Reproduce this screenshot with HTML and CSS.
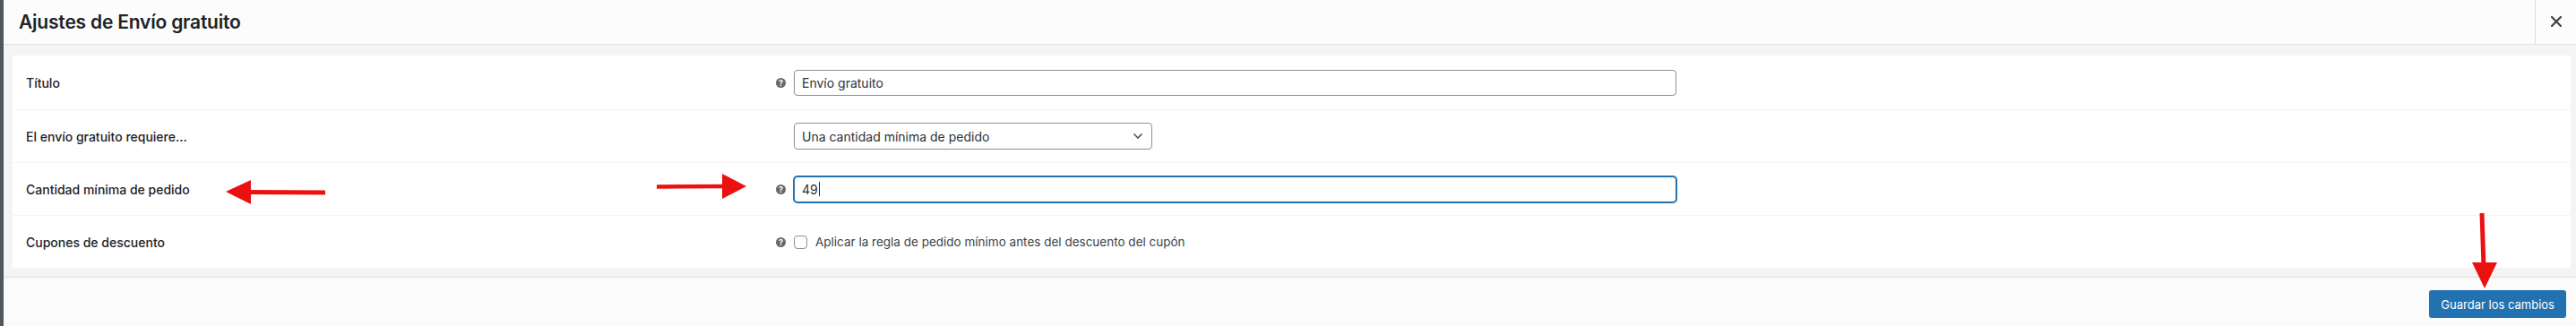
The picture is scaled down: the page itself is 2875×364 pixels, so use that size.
FILE: index.html
```html
<!DOCTYPE html>
<html>
    <head>
        <title>Ajustes de Envío gratuito</title>
        <link rel="stylesheet" href="styles.css">
    </head>
    <body>
        <div class="page">
            <div class="edge"></div>
            <div class="modal">
                <header class="modal-head">
                    <h1>Ajustes de Envío gratuito</h1>
                    <button class="close" aria-label="Cerrar">
                        <svg width="12" height="12" viewBox="0 0 12 12"><path d="M1 1 L11 11 M11 1 L1 11" stroke="#3c434a" stroke-width="2.2" stroke-linecap="square"/></svg>
                    </button>
                </header>

                <div class="modal-body">
                    <div class="card">
                        <div class="row">
                            <label class="label" for="in_title">Título</label>
                            <div class="field">
                                <span class="help">?</span>
                                <input type="text" class="text-input" id="in_title" value="Envío gratuito">
                            </div>
                        </div>
                        <div class="row">
                            <label class="label" for="in_requires">El envío gratuito requiere...</label>
                            <div class="field">
                                <span class="help-spacer"></span>
                                <div class="select" id="in_requires">
                                    <span>Una cantidad mínima de pedido</span>
                                    <svg width="12" height="8" viewBox="0 0 12 8"><path d="M1.5 1.5 L6 6 L10.5 1.5" fill="none" stroke="#50575e" stroke-width="1.6"/></svg>
                                </div>
                            </div>
                        </div>
                        <div class="row">
                            <label class="label" for="in_min">Cantidad mínima de pedido</label>
                            <div class="field">
                                <span class="help">?</span>
                                <div class="text-input focused" id="in_min">49<span class="caret"></span></div>
                            </div>
                        </div>
                        <div class="row">
                            <span class="label">Cupones de descuento</span>
                            <div class="field">
                                <span class="help">?</span>
                                <label class="check"><span class="box"></span>Aplicar la regla de pedido mínimo antes del descuento del cupón</label>
                            </div>
                        </div>
                    </div>
                </div>

                <footer class="modal-foot">
                    <button class="save">Guardar los cambios</button>
                </footer>
            </div>
        </div>

        <!-- red annotation arrows drawn over the screenshot -->
        <svg class="arrows" width="2875" height="364" viewBox="0 0 2875 364">
            <line x1="363" y1="215" x2="274" y2="214.5" stroke="#ec1111" stroke-width="5"/>
            <polygon points="252,214 280,201 280,228" fill="#ec1111"/>
            <line x1="733" y1="208.5" x2="810" y2="208" stroke="#ec1111" stroke-width="4.5"/>
            <polygon points="806,194 806,222 833,208" fill="#ec1111"/>
            <line x1="2770" y1="238" x2="2772" y2="298" stroke="#ec1111" stroke-width="5"/>
            <polygon points="2759,293 2787,293 2773,322" fill="#ec1111"/>
        </svg>
    </body>
</html>
```

FILE: styles.css
```css
body {
    margin: 0;
    background-color: #f6f7f7;
    font-family: Inter, "Noto Sans", sans-serif;
    color: #1d2327;
    overflow: hidden;
}
.page {
    display: flex;
    height: 364px;
}
.edge {
    width: 4px;
    background-color: #50575e;
}
.modal {
    flex: 1;
    display: flex;
    flex-direction: column;
}
.modal-head {
    display: flex;
    align-items: center;
    height: 49px;
    background-color: #fcfcfc;
    border-bottom: 1px solid #e2e4e7;
}
.modal-head h1 {
    flex: 1;
    margin: 0;
    padding-left: 17px;
    font-size: 21px;
    font-weight: 600;
    letter-spacing: -0.2px;
}
.close {
    width: 46px;
    height: 49px;
    border: 0;
    border-left: 1px solid #dcdcde;
    background: none;
    display: flex;
    align-items: center;
    justify-content: center;
    padding: 0 0 2px 0;
}
.modal-body {
    padding: 12px 6px 10px 10px;
    background-color: #f4f4f4;
}
.card {
    background-color: #fff;
}
.row {
    box-sizing: border-box;
    display: grid;
    grid-template-columns: 852px 1fr;
    align-items: center;
    height: 59px;
    border-top: 1px solid #f4f4f4;
}
.row:first-child {
    border-top: 0;
    height: 60px;
}
.label {
    padding-left: 15px;
    font-size: 14px;
    font-weight: 500;
}
.field {
    display: flex;
    align-items: center;
    gap: 9px;
}
.help, .help-spacer {
    width: 11px;
    height: 11px;
    flex: none;
}
.help {
    border-radius: 50%;
    background-color: #646970;
    color: #fff;
    font-size: 9px;
    font-weight: 700;
    line-height: 11px;
    text-align: center;
}
.text-input {
    box-sizing: border-box;
    width: 985px;
    height: 29px;
    padding: 0 8px;
    border: 1px solid #8c8f94;
    border-radius: 4px;
    font-family: Inter, "Noto Sans", sans-serif;
    font-size: 14px;
    color: #2c3338;
    background-color: #fff;
}
.text-input.focused {
    display: flex;
    align-items: center;
    border-color: #2271b1;
    box-shadow: 0 0 0 1px #2271b1;
}
.caret {
    width: 1px;
    height: 16px;
    margin-left: 1px;
    background-color: #1d2327;
}
.select {
    box-sizing: border-box;
    display: flex;
    align-items: center;
    justify-content: space-between;
    width: 400px;
    height: 30px;
    padding: 0 9px 0 8px;
    border: 1px solid #8c8f94;
    border-radius: 4px;
    font-size: 14px;
    color: #2c3338;
}
.check {
    display: flex;
    align-items: center;
    gap: 9px;
    font-size: 13.5px;
    color: #3c434a;
}
.box {
    box-sizing: border-box;
    width: 15px;
    height: 15px;
    border: 1px solid #8c8f94;
    border-radius: 4px;
}
.modal-foot {
    flex: 1;
    display: flex;
    justify-content: flex-end;
    align-items: flex-start;
    padding: 14px 11px 0 0;
    background-color: #fbfbfb;
    border-top: 1px solid #dcdcde;
}
.save {
    height: 31px;
    padding: 0 13px;
    border: 0;
    border-radius: 3px;
    background-color: #2271b1;
    color: #fff;
    font-family: Inter, "Noto Sans", sans-serif;
    font-size: 13px;
}
.arrows {
    position: absolute;
    left: 0;
    top: 0;
    pointer-events: none;
}
```
